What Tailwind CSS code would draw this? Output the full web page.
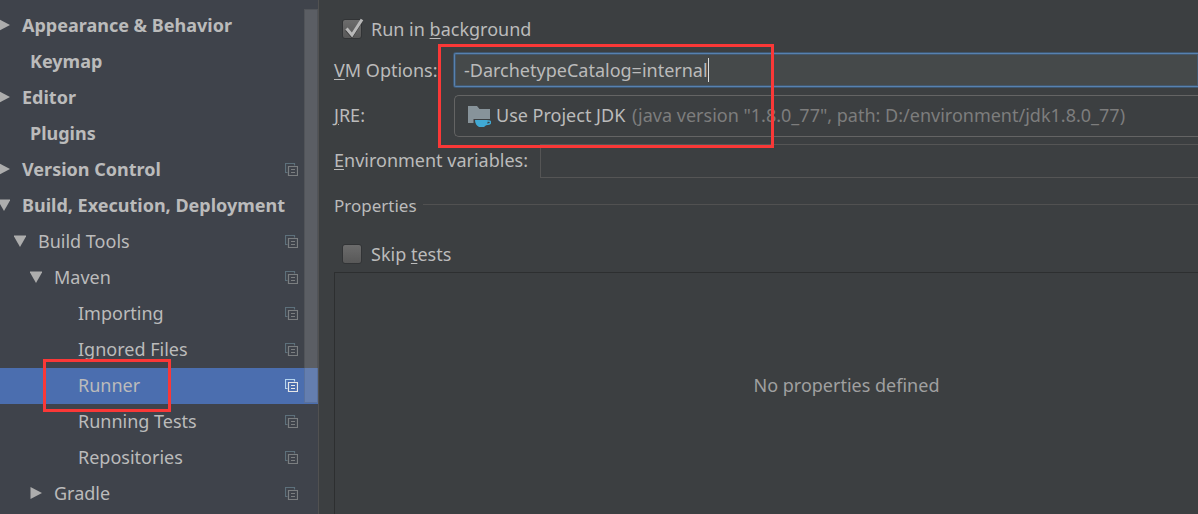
<!DOCTYPE html>
<html lang="en">
<head>
<meta charset="utf-8">
<meta name="viewport" content="width=device-width, initial-scale=1">
<title>Settings - Maven Runner</title>
<script src="https://cdn.jsdelivr.net/npm/@tailwindcss/browser@4"></script>
</head>
<body class="bg-[#3c3f41] font-['Noto_Sans',sans-serif] text-[18px] leading-6 text-[#bbbbbb]">
<svg class="hidden" aria-hidden="true">
  <symbol id="right" viewBox="0 0 12 12"><path d="M0.5 0L12 6L0.5 12Z" fill="#adadad"/></symbol>
  <symbol id="down" viewBox="0 0 12 12"><path d="M-0.5 0.5H12.5L6 12Z" fill="#adadad"/></symbol>
  <symbol id="copy" viewBox="0 0 13 13"><path d="M2.5 9.5H0.5V0.5H9.5V2.5" fill="none" stroke="var(--b)" stroke-width="1.2"/><path d="M3.5 3.5H12.5V12.5H3.5ZM6 6.5H10M6 9.5H10" fill="none" stroke="var(--f)" stroke-width="1.2"/></symbol>
</svg>
<div class="relative flex min-h-screen overflow-hidden">
  <nav aria-label="Settings" class="relative w-[319px] shrink-0 border-r border-[#515151] bg-[#3f434b] pt-2 [--b:#5d707b] [--f:#7b7e80]">
    <ul>
      <li class="flex h-9 items-center gap-3 pb-0.5 font-bold"><svg class="h-3 w-2.5" viewBox="2 0 10 12"><path d="M0.5 0L12 6L0.5 12Z" fill="#adadad"/></svg><a href="#">Appearance &amp; Behavior</a></li>
      <li class="flex h-9 items-center pb-0.5 pl-[30px] font-bold"><a href="#">Keymap</a></li>
      <li class="flex h-9 items-center gap-3 pb-0.5 font-bold"><svg class="h-3 w-2.5" viewBox="2 0 10 12"><path d="M0.5 0L12 6L0.5 12Z" fill="#adadad"/></svg><a href="#">Editor</a></li>
      <li class="flex h-9 items-center pb-0.5 pl-[30px] font-bold"><a href="#">Plugins</a></li>
      <li class="flex h-9 items-center gap-3 pr-5 pb-0.5 font-bold"><svg class="h-3 w-2.5" viewBox="2 0 10 12"><path d="M0.5 0L12 6L0.5 12Z" fill="#adadad"/></svg><a href="#">Version Control</a><svg class="ml-auto size-[13px]"><use href="#copy"/></svg></li>
      <li class="flex h-9 items-center gap-3 pb-0.5 font-bold"><svg class="h-3 w-2.5 shrink-0" viewBox="2 0 10 12"><path d="M-0.5 0.5H12.5L6 12Z" fill="#adadad"/></svg><a href="#" class="whitespace-nowrap">Build, Execution, Deployment</a></li>
      <li class="flex h-9 items-center gap-3 pr-5 pb-0.5 pl-3.5"><svg class="size-3"><use href="#down"/></svg><a href="#">Build Tools</a><svg class="ml-auto size-[13px]"><use href="#copy"/></svg></li>
      <li class="flex h-9 items-center gap-3 pr-5 pb-0.5 pl-[30px]"><svg class="size-3"><use href="#down"/></svg><a href="#">Maven</a><svg class="ml-auto size-[13px]"><use href="#copy"/></svg></li>
      <li class="flex h-9 items-center pr-5 pb-0.5 pl-[78px]"><a href="#">Importing</a><svg class="ml-auto size-[13px]"><use href="#copy"/></svg></li>
      <li class="flex h-9 items-center pr-5 pb-0.5 pl-[78px]"><a href="#">Ignored Files</a><svg class="ml-auto size-[13px]"><use href="#copy"/></svg></li>
      <li class="flex h-9 items-center bg-[#4b6eaf] pr-5 pb-0.5 pl-[78px] [--b:#b5d5f0] [--f:#e6e6e6]"><a href="#" aria-current="page">Runner</a><svg class="ml-auto size-[13px]"><use href="#copy"/></svg></li>
      <li class="flex h-9 items-center pr-5 pb-0.5 pl-[78px]"><a href="#">Running Tests</a><svg class="ml-auto size-[13px]"><use href="#copy"/></svg></li>
      <li class="flex h-9 items-center pr-5 pb-0.5 pl-[78px]"><a href="#">Repositories</a><svg class="ml-auto size-[13px]"><use href="#copy"/></svg></li>
      <li class="flex h-9 items-center gap-3 pr-5 pb-0.5 pl-[30px]"><svg class="size-3"><use href="#right"/></svg><a href="#">Gradle</a><svg class="ml-auto size-[13px]"><use href="#copy"/></svg></li>
    </ul>
    <div class="absolute top-[9px] right-0 h-[394px] w-3.5 border border-black/10 bg-[#b0b0b0]/25"></div>
  </nav>
  <main class="flex min-w-0 flex-1 flex-col pt-[17px] pl-[15px]">
    <label class="flex items-center gap-[9px] pl-2">
      <span class="grid size-5 shrink-0">
        <input type="checkbox" checked class="peer col-start-1 row-start-1 size-5 appearance-none rounded-[3px] border border-[#323436] bg-linear-to-b from-[#6c6c6c] to-[#585858]">
        <svg class="pointer-events-none z-10 col-start-1 row-start-1 hidden size-5 overflow-visible peer-checked:block" viewBox="0 0 20 20" fill="none"><path d="M4 11L10 18L20 2" stroke="#3a3a3a" stroke-width="2"/><path d="M4.5 9.5L10 16L20 0.5" stroke="#b8b8b8" stroke-width="3"/></svg>
      </span>
      <span>Run in <span class="underline underline-offset-2">b</span>ackground</span>
    </label>
    <div class="mt-3 flex items-center">
      <label for="vm" class="w-[120px] shrink-0 whitespace-nowrap"><span class="underline underline-offset-2">V</span>M Options:</label>
      <div class="flex h-[34px] min-w-0 flex-1 items-center rounded-l-[2px] border border-r-0 border-[#5781b0] bg-[#45494a] pl-[9px] ring-1 inset-ring-1 ring-[#3f5872] inset-ring-[#43586d]">
        <input id="vm" type="text" value="-DarchetypeCatalog=internal" class="field-sizing-content min-w-0 outline-none"><span class="h-6 w-px bg-[#dddddd]"></span>
      </div>
    </div>
    <div class="mt-2 flex items-center">
      <label for="jre" class="w-[120px] shrink-0 pb-0.5"><span class="underline underline-offset-2">J</span>RE:</label>
      <div class="flex h-[42px] min-w-0 flex-1 items-center rounded-l-[5px] border border-r-0 border-[#646464] pl-3">
        <svg class="mr-[5px] h-[22px] w-6 shrink-0" viewBox="0 0 24 22"><path d="M1 1H10L12.5 4H23V14H6.5V18H1Z" fill="#87939a"/><path d="M8 15H20.5V18Q20 20 17 22H12Q8 20 8 15Z" fill="#40a9d4"/><path d="M20 16H22Q23.5 16 23.5 17.5Q23.5 19.3 19 19.5" fill="none" stroke="#40a9d4" stroke-width="1.5"/></svg>
        <select id="jre" class="appearance-none pb-0.5 outline-none"><option>Use Project JDK</option></select>
        <span class="ml-1.5 pb-0.5 whitespace-nowrap text-[#7d7d7d]">(java version "1.8.0_77", path: D:/environment/jdk1.8.0_77)</span>
      </div>
    </div>
    <div class="mt-[7px] flex items-center">
      <label for="env" class="w-[206px] shrink-0 pb-0.5 whitespace-nowrap"><span class="underline underline-offset-2">E</span>nvironment variables:</label>
      <input id="env" type="text" class="h-[34px] min-w-0 flex-1 border border-r-0 border-[#555555] px-2 outline-none">
    </div>
    <div class="mt-4 flex items-center gap-1.5">
      <h2 class="text-[17px]">Properties</h2><div class="mb-1 h-px flex-1 bg-[#515151]"></div>
    </div>
    <label class="mt-6 flex items-center gap-[9px] pl-2">
      <input type="checkbox" class="size-5 appearance-none rounded-[3px] border border-[#323436] bg-linear-to-b from-[#6c6c6c] to-[#585858]">
      <span>Skip <span class="underline underline-offset-2">t</span>ests</span>
    </label>
    <div class="mt-1.5 flex min-h-[242px] flex-1 items-center justify-center border-t border-l border-[#2d2f30] pb-[18px] pl-40 text-[#a0a0a0]"><p>No properties defined</p></div>
  </main>
  <div class="pointer-events-none absolute top-[359px] left-[43px] h-[53px] w-32 border-3 border-[#fa3837]"></div>
  <div class="pointer-events-none absolute top-[44px] left-[438px] h-[104px] w-[336px] border-3 border-[#fa3837]"></div>
</div>
</body>
</html>
